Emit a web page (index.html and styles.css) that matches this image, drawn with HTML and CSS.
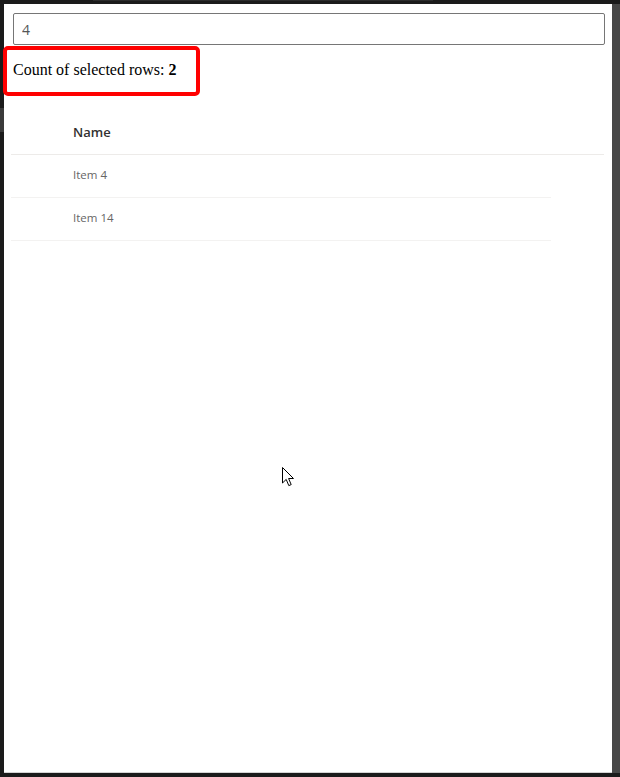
FILE: index.html
```html
<!DOCTYPE html>
<html>
<head>
<meta charset="utf-8">
<link rel="stylesheet" href="styles.css">
</head>
<body>
<div class="screen">
  <div class="topbar"><div class="topseg"></div></div>
  <div class="middle">
    <div class="leftbar"><div class="leftseg"></div></div>
    <div class="panel">
      <input class="search" type="text" value="4">
      <p class="count">Count of selected rows: <b>2</b></p>
      <div class="highlight"></div>
      <div class="list">
        <div class="header"><span class="hcell">Name</span></div>
        <div class="row"><span class="cell">Item 4</span></div>
        <div class="row"><span class="cell">Item 14</span></div>
      </div>
      <svg class="cursor" width="13" height="20" viewBox="0 0 13 20">
        <path d="M0.5 0.5 L0.5 16 L4.2 12.4 L6.8 18.6 L9.2 17.6 L6.6 11.5 L11.5 11.5 Z" fill="#fff" stroke="#000" stroke-width="1" stroke-linejoin="miter"/>
      </svg>
    </div>
    <div class="scrollbar"></div>
  </div>
</div>
</body>
</html>
```

FILE: styles.css
```css
html, body {
  margin: 0;
  padding: 0;
  background: #1b1b1b;
}
.screen {
  width: 620px;
  height: 777px;
  overflow: hidden;
  background: #1b1b1b;
}
.topbar {
  height: 4px;
}
.topseg {
  margin-left: 93px;
  width: 340px;
  height: 1px;
  background: #2c2c2c;
}
.middle {
  display: flex;
  height: 769px;
}
.leftbar {
  width: 4px;
  flex: none;
}
.leftseg {
  margin-top: 104px;
  height: 24px;
  background: #3a3a3a;
}
.panel {
  position: relative;
  width: 608px;
  height: 768px;
  flex: none;
  background: #ffffff;
  border-bottom: 1px solid #d4d4d4;
}
.scrollbar {
  width: 8px;
  flex: none;
  background: #474747;
}
.search {
  display: block;
  box-sizing: border-box;
  margin: 9px 0 0 9px;
  width: 592px;
  height: 32px;
  border: 1px solid #767676;
  border-radius: 2px;
  padding: 0 8px;
  font-family: "Open Sans", "Noto Sans", sans-serif;
  font-size: 14px;
  color: #555;
  outline: none;
}
.count {
  margin: 16px 0 16px 9px;
  font-family: "Liberation Serif", serif;
  font-size: 16px;
  line-height: 18px;
  color: #000;
}
.highlight {
  position: absolute;
  left: -1px;
  top: 42px;
  width: 189px;
  height: 42px;
  border: 4px solid #ff0000;
  border-radius: 5px;
}
.list {
  margin-left: 7px;
  width: 593px;
  padding-top: 17px;
  font-family: "Open Sans", "Noto Sans", sans-serif;
}
.header {
  height: 40px;
  padding-bottom: 2px;
  border-bottom: 1px solid #edebe9;
  display: flex;
  align-items: center;
  padding-left: 62px;
}
.hcell {
  font-size: 13px;
  font-weight: 600;
  color: #323130;
}
.row {
  width: 478px;
  height: 42px;
  border-bottom: 1px solid #f3f2f1;
  display: flex;
  align-items: center;
  padding-left: 62px;
}
.cell {
  font-size: 11.5px;
  color: #666666;
  margin-bottom: 4px;
}
.cursor {
  position: absolute;
  left: 278px;
  top: 463px;
}
```
